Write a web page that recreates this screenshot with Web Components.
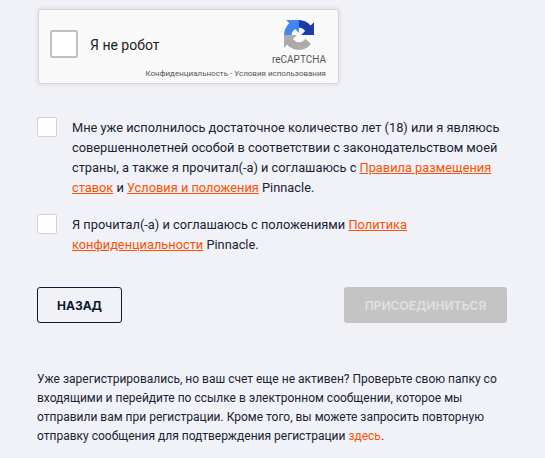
<!DOCTYPE html>
<html lang="ru">
<head>
<meta charset="utf-8">
<title>Регистрация</title>
<style>
    html, body { margin: 0; padding: 0; background: #f0f2f7; }
    body { font-family: Roboto, "Liberation Sans", sans-serif; color: #1a2233; overflow: hidden; }
</style>
</head>
<body>
<signup-step>
    <captcha-box></captcha-box>
    <terms-check>Мне уже исполнилось достаточное количество лет (18) или я являюсь совершеннолетней особой в соответствии с законодательством моей страны, а также я прочитал(-а) и соглашаюсь с <a href="#">Правила размещения</a> <a href="#">ставок</a> и <a href="#">Условия и положения</a> Pinnacle.</terms-check>
    <terms-check>Я прочитал(-а) и соглашаюсь с положениями <a href="#">Политика</a> <a href="#">конфиденциальности</a> Pinnacle.</terms-check>
    <form-actions></form-actions>
    <signup-note>Уже зарегистрировались, но ваш счет еще не активен? Проверьте свою папку со входящими и перейдите по ссылке в электронном сообщении, которое мы отправили вам при регистрации. Кроме того, вы можете запросить повторную отправку сообщения для подтверждения регистрации <a href="#">здесь</a>.</signup-note>
</signup-step>

<script>
class SignupStep extends HTMLElement {
    constructor() {
        super();
        this.attachShadow({ mode: 'open' });
        this.shadowRoot.innerHTML = `
            <style>
                :host {
                    display: flex;
                    flex-direction: column;
                    box-sizing: border-box;
                    width: 545px;
                    padding: 9px 38px 0 37px;
                }
            </style>
            <slot></slot>
        `;
    }
}

class CaptchaBox extends HTMLElement {
    constructor() {
        super();
        this.attachShadow({ mode: 'open' });
        this.shadowRoot.innerHTML = `
            <style>
                :host {
                    display: flex;
                    box-sizing: border-box;
                    width: 301px;
                    height: 75px;
                    margin: 0 0 33px 1px;
                    padding: 0 12px 0 11px;
                    align-items: flex-start;
                    background: #f9f9f9;
                    border: 1px solid #d3d3d3;
                    border-radius: 3px;
                    box-shadow: 0 0 4px 1px rgba(0, 0, 0, .08);
                }
                .tick {
                    box-sizing: border-box;
                    flex: none;
                    width: 28px;
                    height: 28px;
                    margin-top: 20px;
                    background: #fff;
                    border: 2px solid #c1c1c1;
                    border-radius: 2px;
                }
                .label {
                    margin: 26px 0 0 12px;
                    font: 14px/18px Roboto, sans-serif;
                    color: #222;
                    flex: 1;
                    white-space: nowrap;
                }
                .brand {
                    display: flex;
                    flex-direction: column;
                    align-items: flex-end;
                    flex: none;
                    width: 60px;
                    padding-top: 10px;
                    color: #555;
                }
                svg { display: block; width: 30px; height: 30px; margin-right: 12px; }
                .name { font: 10px/12px Roboto, sans-serif; margin-top: 4px; }
                .links { font: 8px/10px Roboto, sans-serif; margin-top: 3px; white-space: nowrap; }
            </style>
            <div class="tick"></div>
            <div class="label">Я не робот</div>
            <div class="brand">
                <svg viewBox="0 0 64 64">
                    <path fill="#1c3aa9" d="M64 31.955l-.033-1.37V4.687l-7.16 7.16C50.948 4.674 42.033.093 32.05.093c-10.4 0-19.622 4.96-25.458 12.64l11.736 11.86a15.55 15.55 0 0 1 4.754-5.334c2.05-1.6 4.952-2.906 8.968-2.906.485 0 .86.057 1.135.163 4.976.393 9.288 3.14 11.828 7.124l-8.307 8.307c10.522-.04 22.4-.066 27.295.006"/>
                    <path fill="#4285f4" d="M31.862.094l-1.37.033H4.594l7.16 7.16C4.58 13.147 0 22.06 0 32.046c0 10.4 4.96 19.622 12.64 25.458l11.86-11.736a15.55 15.55 0 0 1-5.334-4.754c-1.6-2.05-2.906-4.952-2.906-8.968 0-.485.057-.86.163-1.135.393-4.976 3.14-9.288 7.124-11.828l8.307 8.307c-.04-10.522-.066-22.4.006-27.295"/>
                    <path fill="#ababab" d="M.001 32.045l.033 1.37v25.898l7.16-7.16c5.86 7.173 14.774 11.754 24.76 11.754 10.4 0 19.622-4.96 25.458-12.64l-11.736-11.86a15.55 15.55 0 0 1-4.754 5.334c-2.05 1.6-4.952 2.906-8.968 2.906-.485 0-.86-.057-1.135-.163-4.976-.393-9.288-3.14-11.828-7.124l8.307-8.307c-10.522.04-22.4.066-27.295-.006"/>
                </svg>
                <div class="name">reCAPTCHA</div>
                <div class="links">Конфиденциальность - Условия использования</div>
            </div>
        `;
    }
}

class TermsCheck extends HTMLElement {
    constructor() {
        super();
        this.attachShadow({ mode: 'open' });
        this.shadowRoot.innerHTML = `
            <style>
                :host {
                    display: flex;
                    gap: 15px;
                    margin-bottom: 16px;
                    font: 12.8px/20px Roboto, sans-serif;
                    color: #1a2233;
                }
                .box {
                    box-sizing: border-box;
                    flex: none;
                    width: 20px;
                    height: 20px;
                    background: #fff;
                    border: 1px solid #ced2da;
                    border-radius: 2px;
                }
                .text { padding-top: 1px; }
                ::slotted(a) { color: #ff5000; text-decoration: underline; }
            </style>
            <div class="box"></div>
            <div class="text"><slot></slot></div>
        `;
    }
}

class FormActions extends HTMLElement {
    constructor() {
        super();
        this.attachShadow({ mode: 'open' });
        this.shadowRoot.innerHTML = `
            <style>
                :host {
                    display: flex;
                    justify-content: space-between;
                    margin: 16px 0 47px;
                }
                button {
                    box-sizing: border-box;
                    height: 36px;
                    padding: 0;
                    border-radius: 3px;
                    font: 700 12px Inter, Roboto, sans-serif;
                }
                .back {
                    width: 85px;
                    background: transparent;
                    border: 1px solid #0e1a33;
                    color: #0e1a33;
                }
                .join {
                    width: 163px;
                    background: #c4c4c4;
                    border: 0;
                    color: #dedede;
                }
            </style>
            <button class="back">НАЗАД</button>
            <button class="join">ПРИСОЕДИНИТЬСЯ</button>
        `;
    }
}

class SignupNote extends HTMLElement {
    constructor() {
        super();
        this.attachShadow({ mode: 'open' });
        this.shadowRoot.innerHTML = `
            <style>
                :host {
                    display: block;
                    font: 12px/19px Roboto, sans-serif;
                    color: #1a2233;
                }
                ::slotted(a) { color: #ff5000; text-decoration: none; }
            </style>
            <slot></slot>
        `;
    }
}

customElements.define('signup-step', SignupStep);
customElements.define('captcha-box', CaptchaBox);
customElements.define('terms-check', TermsCheck);
customElements.define('form-actions', FormActions);
customElements.define('signup-note', SignupNote);
</script>
</body>
</html>
